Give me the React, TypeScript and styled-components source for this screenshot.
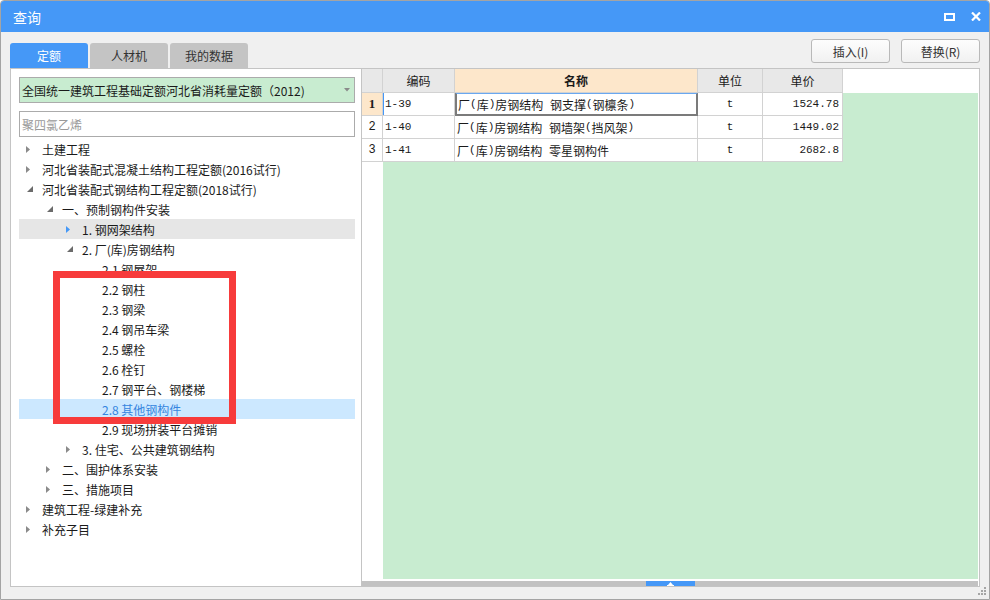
import React from 'react';
import styled, { createGlobalStyle } from 'styled-components';

const GlobalStyle = createGlobalStyle`
  html, body { margin: 0; padding: 0; background: #ffffff; }
  body {
    font-family: "Noto Sans CJK SC", "Noto Sans", sans-serif;
    font-size: 12px;
    color: #1a1a1a;
  }
  * { box-sizing: border-box; }
`;

const BLUE = '#4598f7';
const GRID_LINE = '#d2d2d2';
const PANEL_LINE = '#c4c4c4';

const Window = styled.div`
  width: 990px;
  height: 600px;
  display: flex;
  flex-direction: column;
  border: 1px solid #a4a4a4;
  border-radius: 4px 4px 0 0;
  background: #f0f0f0;
  overflow: hidden;
`;

const TitleBar = styled.div`
  height: 31px;
  flex: none;
  display: flex;
  align-items: center;
  background: ${BLUE};
  padding: 0 5px 0 12px;
`;

const Title = styled.div`
  flex: 1;
  color: #ffffff;
  font-size: 14px;
  line-height: 31px;
  margin-top: 1px;
`;

const TitleButton = styled.div`
  width: 16px;
  height: 16px;
  display: flex;
  align-items: center;
  justify-content: center;
  margin-left: 11px;
`;

const Body = styled.div`
  flex: 1;
  display: flex;
  flex-direction: column;
  padding: 0 9px;
  min-height: 0;
`;

const TopRow = styled.div`
  height: 36px;
  flex: none;
  display: flex;
  align-items: flex-start;
`;

const Tabs = styled.div`
  flex: 1;
  height: 36px;
  display: flex;
  align-items: flex-end;
  gap: 2px;
`;

const Tab = styled.div<{ $active?: boolean }>`
  width: 78px;
  height: 25px;
  border-radius: 3px 3px 0 0;
  display: flex;
  align-items: center;
  justify-content: center;
  font-size: 12px;
  background: ${(p) => (p.$active ? BLUE : '#c4c4c4')};
  color: ${(p) => (p.$active ? '#ffffff' : '#333333')};
`;

const Buttons = styled.div`
  display: flex;
  gap: 11px;
  margin-top: 7px;
`;

const ActionButton = styled.div`
  width: 79px;
  height: 24px;
  border: 1px solid #b9b9b9;
  border-radius: 3px;
  background: linear-gradient(#fdfdfd, #f1f1f1);
  display: flex;
  align-items: center;
  justify-content: center;
  font-size: 12px;
  color: #333333;
`;

const Main = styled.div`
  flex: 1;
  display: flex;
  min-height: 0;
`;

const LeftPanel = styled.div`
  position: relative;
  width: 352px;
  flex: none;
  background: #ffffff;
  border: 1px solid ${PANEL_LINE};
  padding: 8px 6px 8px 8px;
  display: flex;
  flex-direction: column;
`;

const Dropdown = styled.div`
  height: 26px;
  border: 1px solid #ababab;
  background: #c8ecd0;
  display: flex;
  align-items: center;
  padding: 0 4px 0 2px;
`;

const DropdownText = styled.div`
  flex: 1;
  color: #1a1a1a;
`;

const SearchInput = styled.input`
  margin-top: 8px;
  height: 26px;
  border: 1px solid #ababab;
  padding: 0 2px;
  font-family: "Noto Sans CJK SC", "Noto Sans", sans-serif;
  font-size: 12px;
  outline: none;
  &::placeholder { color: #9a9a9a; }
`;

const Tree = styled.div`
  margin-top: 2px;
  display: flex;
  flex-direction: column;
`;

const TreeRow = styled.div<{ $level: number; $hover?: boolean; $selected?: boolean }>`
  height: 20px;
  display: flex;
  align-items: center;
  padding-left: ${(p) => p.$level * 20}px;
  background: ${(p) => (p.$selected ? '#cce8ff' : p.$hover ? '#e6e6e6' : 'transparent')};
  color: ${(p) => (p.$selected ? '#3585e0' : '#1a1a1a')};
  white-space: nowrap;
`;

const Toggle = styled.span<{ $expanded?: boolean }>`
  width: 23px;
  height: 20px;
  flex: none;
  display: flex;
  align-items: center;
  padding-left: ${(p) => (p.$expanded ? 8 : 7)}px;
`;

const Annotation = styled.div`
  position: absolute;
  left: 42px;
  top: 202px;
  width: 183px;
  height: 153px;
  border: 7px solid #f73b3b;
  pointer-events: none;
`;

const RightPanel = styled.div`
  flex: 1;
  background: #ffffff;
  border: 1px solid ${PANEL_LINE};
  border-left: none;
  padding-right: 1px;
  display: flex;
  flex-direction: column;
  min-width: 0;
`;

const GridArea = styled.div`
  flex: 1;
  display: grid;
  grid-template-columns: 21px 1fr;
  grid-template-rows: 24px 1fr;
  min-height: 0;
`;

const Corner = styled.div`
  background: #e8e8e8;
  border-right: 1px solid ${GRID_LINE};
  border-bottom: 1px solid ${GRID_LINE};
`;

const HeaderStrip = styled.div`
  display: flex;
  background: #ffffff;
`;

const HeaderCell = styled.div<{ $w: number; $accent?: boolean }>`
  width: ${(p) => p.$w}px;
  flex: none;
  height: 24px;
  display: flex;
  align-items: center;
  justify-content: center;
  background: ${(p) => (p.$accent ? '#fde7cb' : '#e8e8e8')};
  font-weight: ${(p) => (p.$accent ? 700 : 400)};
  border-right: 1px solid ${GRID_LINE};
  border-bottom: 1px solid ${GRID_LINE};
  color: #1a1a1a;
`;

const RowNumStrip = styled.div`
  background: #ffffff;
  display: flex;
  flex-direction: column;
`;

const RowNum = styled.div<{ $active?: boolean }>`
  height: 23px;
  display: flex;
  align-items: center;
  justify-content: center;
  background: ${(p) => (p.$active ? '#fde7cb' : '#ffffff')};
  border-right: 1px solid ${GRID_LINE};
  border-bottom: 1px solid ${GRID_LINE};
  font-family: ${(p) => (p.$active ? '"Liberation Serif", serif' : '"Liberation Mono", monospace')};
  font-size: ${(p) => (p.$active ? 13 : 12)}px;
  font-weight: ${(p) => (p.$active ? 700 : 400)};
  color: #1a1a1a;
`;

const DataBody = styled.div`
  background: #c8ecd0;
  display: flex;
  flex-direction: column;
`;

const DataRow = styled.div`
  display: flex;
  height: 23px;
`;

const Cell = styled.div<{ $w: number; $align?: 'left' | 'center' | 'right'; $marker?: boolean; $focus?: boolean }>`
  width: ${(p) => p.$w}px;
  flex: none;
  height: 23px;
  display: flex;
  align-items: center;
  justify-content: ${(p) => (p.$align === 'center' ? 'center' : p.$align === 'right' ? 'flex-end' : 'flex-start')};
  padding: 0 ${(p) => (p.$align === 'right' ? 3 : 2)}px 0 2px;
  background: #ffffff;
  border-right: 1px solid ${GRID_LINE};
  border-bottom: 1px solid ${GRID_LINE};
  box-shadow: ${(p) => (p.$marker ? `inset 1px 0 0 ${BLUE}` : 'none')};
  ${(p) =>
    p.$focus
      ? `border: 2px solid #7b7b7b; border-top: 1px solid #6aa8f0; padding-left: 1px;`
      : ''}
  white-space: nowrap;
  overflow: hidden;
  color: #1a1a1a;
`;

const Mono = styled.span`
  font-family: "Liberation Mono", monospace;
  font-size: 11px;
  white-space: pre;
`;

const HScroll = styled.div`
  height: 5px;
  margin-top: 2px;
  background: #c2c2c2;
  display: flex;
  justify-content: center;
`;

const ScrollThumb = styled.div`
  width: 49px;
  height: 5px;
  background: ${BLUE};
  display: flex;
  align-items: center;
  justify-content: center;
`;

const BottomBar = styled.div`
  height: 12px;
  flex: none;
  display: flex;
  justify-content: flex-end;
  align-items: flex-start;
  padding-right: 3px;
`;

type Node = {
  level: number;
  label: string;
  state: 'collapsed' | 'expanded' | 'leaf';
  hover?: boolean;
  selected?: boolean;
};

const treeData: Node[] = [
  { level: 0, label: '土建工程', state: 'collapsed' },
  { level: 0, label: '河北省装配式混凝土结构工程定额(2016试行)', state: 'collapsed' },
  { level: 0, label: '河北省装配式钢结构工程定额(2018试行)', state: 'expanded' },
  { level: 1, label: '一、预制钢构件安装', state: 'expanded' },
  { level: 2, label: '1. 钢网架结构', state: 'collapsed', hover: true },
  { level: 2, label: '2. 厂(库)房钢结构', state: 'expanded' },
  { level: 3, label: '2.1 钢屋架', state: 'leaf' },
  { level: 3, label: '2.2 钢柱', state: 'leaf' },
  { level: 3, label: '2.3 钢梁', state: 'leaf' },
  { level: 3, label: '2.4 钢吊车梁', state: 'leaf' },
  { level: 3, label: '2.5 螺栓', state: 'leaf' },
  { level: 3, label: '2.6 栓钉', state: 'leaf' },
  { level: 3, label: '2.7 钢平台、钢楼梯', state: 'leaf' },
  { level: 3, label: '2.8 其他钢构件', state: 'leaf', selected: true },
  { level: 3, label: '2.9 现场拼装平台摊销', state: 'leaf' },
  { level: 2, label: '3. 住宅、公共建筑钢结构', state: 'collapsed' },
  { level: 1, label: '二、围护体系安装', state: 'collapsed' },
  { level: 1, label: '三、措施项目', state: 'collapsed' },
  { level: 0, label: '建筑工程-绿建补充', state: 'collapsed' },
  { level: 0, label: '补充子目', state: 'collapsed' },
];

const columns = [
  { key: 'code', title: '编码', w: 72 },
  { key: 'name', title: '名称', w: 243, accent: true },
  { key: 'unit', title: '单位', w: 65 },
  { key: 'price', title: '单价', w: 80 },
];

const rows = [
  { code: '1-39', name: '厂(库)房钢结构 钢支撑(钢檩条)', unit: 't', price: '1524.78' },
  { code: '1-40', name: '厂(库)房钢结构 钢墙架(挡风架)', unit: 't', price: '1449.02' },
  { code: '1-41', name: '厂(库)房钢结构 零星钢构件', unit: 't', price: '2682.8' },
];

function mixed(text: string) {
  const parts = text.split(/([\x20-\x7E]+)/).filter((p) => p.length > 0);
  return parts.map((p, i) =>
    /^[\x20-\x7E]+$/.test(p) ? <Mono key={i}>{p}</Mono> : <React.Fragment key={i}>{p}</React.Fragment>
  );
}

function ToggleIcon({ node }: { node: Node }) {
  if (node.state === 'leaf') return <Toggle />;
  if (node.state === 'expanded') {
    return (
      <Toggle $expanded>
        <svg width="6" height="6" viewBox="0 0 6 6">
          <path d="M6 0 L6 6 L0 6 Z" fill="#6b6b6b" />
        </svg>
      </Toggle>
    );
  }
  return (
    <Toggle>
      <svg width="4" height="7" viewBox="0 0 4 7">
        <path d="M0 0 L4 3.5 L0 7 Z" fill={node.hover ? BLUE : '#8a8a8a'} />
      </svg>
    </Toggle>
  );
}

export default function App() {
  return (
    <>
      <GlobalStyle />
      <Window>
        <TitleBar>
          <Title>查询</Title>
          <TitleButton>
            <svg width="11" height="8" viewBox="0 0 11 8">
              <rect x="1" y="1" width="9" height="6" fill="none" stroke="#ffffff" strokeWidth="2" />
            </svg>
          </TitleButton>
          <TitleButton>
            <svg width="10" height="9" viewBox="0 0 10 9">
              <path d="M1 0.5 L9 8.5 M9 0.5 L1 8.5" stroke="#ffffff" strokeWidth="2.2" />
            </svg>
          </TitleButton>
        </TitleBar>
        <Body>
          <TopRow>
            <Tabs>
              <Tab $active>定额</Tab>
              <Tab>人材机</Tab>
              <Tab>我的数据</Tab>
            </Tabs>
            <Buttons>
              <ActionButton>插入(I)</ActionButton>
              <ActionButton>替换(R)</ActionButton>
            </Buttons>
          </TopRow>
          <Main>
            <LeftPanel>
              <Dropdown>
                <DropdownText>全国统一建筑工程基础定额河北省消耗量定额（2012)</DropdownText>
                <svg width="6" height="4" viewBox="0 0 6 4">
                  <path d="M0 0 L6 0 L3 3.5 Z" fill="#8a8a8a" />
                </svg>
              </Dropdown>
              <SearchInput placeholder="聚四氯乙烯" />
              <Tree>
                {treeData.map((n, i) => (
                  <TreeRow key={i} $level={n.level} $hover={n.hover} $selected={n.selected}>
                    <ToggleIcon node={n} />
                    {n.label}
                  </TreeRow>
                ))}
              </Tree>
              <Annotation />
            </LeftPanel>
            <RightPanel>
              <GridArea>
                <Corner />
                <HeaderStrip>
                  {columns.map((c) => (
                    <HeaderCell key={c.key} $w={c.w} $accent={c.accent}>
                      {c.title}
                    </HeaderCell>
                  ))}
                </HeaderStrip>
                <RowNumStrip>
                  {rows.map((r, i) => (
                    <RowNum key={r.code} $active={i === 0}>
                      {i + 1}
                    </RowNum>
                  ))}
                </RowNumStrip>
                <DataBody>
                  {rows.map((r, i) => (
                    <DataRow key={r.code}>
                      <Cell $w={72} $marker={i === 0}>
                        <Mono>{r.code}</Mono>
                      </Cell>
                      <Cell $w={243} $focus={i === 0}>
                        {mixed(r.name)}
                      </Cell>
                      <Cell $w={65} $align="center">
                        <Mono>{r.unit}</Mono>
                      </Cell>
                      <Cell $w={80} $align="right">
                        <Mono>{r.price}</Mono>
                      </Cell>
                    </DataRow>
                  ))}
                </DataBody>
              </GridArea>
              <HScroll>
                <ScrollThumb>
                  <svg width="7" height="4" viewBox="0 0 7 4">
                    <path d="M3.5 0 L6 3 L1 3 Z" fill="#ffffff" />
                    <rect x="0" y="3" width="7" height="1" fill="#ffffff" />
                  </svg>
                </ScrollThumb>
              </HScroll>
            </RightPanel>
          </Main>
        </Body>
        <BottomBar>
          <svg width="8" height="8" viewBox="0 0 8 8">
            <rect x="6" y="0" width="2" height="2" fill="#a6a6a6" />
            <rect x="3" y="3" width="2" height="2" fill="#a6a6a6" />
            <rect x="6" y="3" width="2" height="2" fill="#a6a6a6" />
            <rect x="0" y="6" width="2" height="2" fill="#a6a6a6" />
            <rect x="3" y="6" width="2" height="2" fill="#a6a6a6" />
            <rect x="6" y="6" width="2" height="2" fill="#a6a6a6" />
          </svg>
        </BottomBar>
      </Window>
    </>
  );
}
